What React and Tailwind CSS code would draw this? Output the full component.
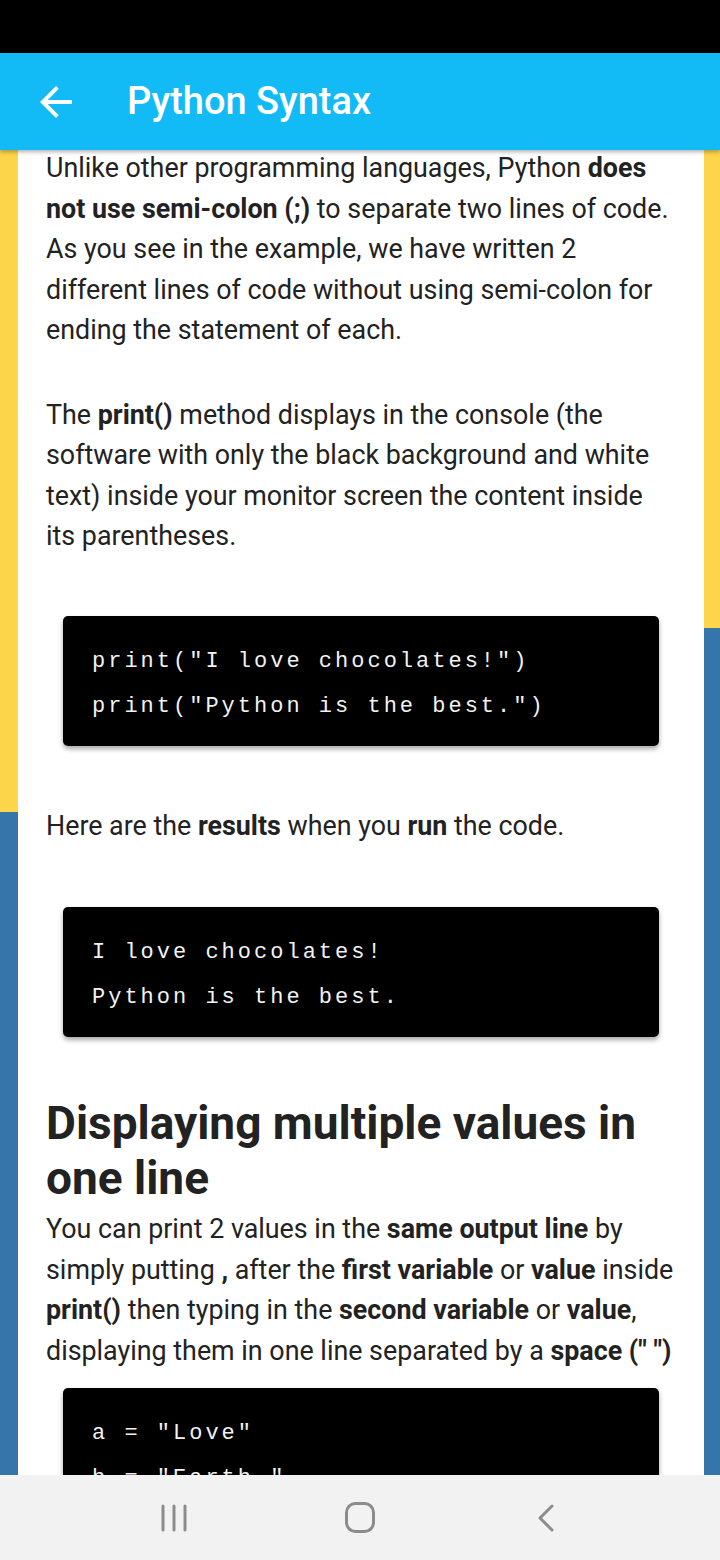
import React from "react";

const font = { fontFamily: "Roboto, 'Noto Sans', sans-serif" };

function CodeBlock({ lines, className = "" }) {
  return (
    <div
      className={
        "mx-[17px] rounded-[5px] bg-black px-[29px] pt-[23px] pb-[17px] shadow-[0_3px_5px_rgba(0,0,0,0.35)] " +
        className
      }
    >
      {lines.map((line, i) => (
        <div
          key={i}
          className="whitespace-pre text-[22px] leading-[45px] tracking-[3px] text-[#f2f2f2]"
          style={{ fontFamily: "'Courier New', 'Nimbus Mono PS', FreeMono, 'Liberation Mono', monospace" }}
        >
          {line}
        </div>
      ))}
    </div>
  );
}

function NavBar() {
  return (
    <div className="flex h-[85px] items-center bg-[#f2f2f2]">
      <div className="flex w-[240px] justify-center pl-[108px] pr-0">
        <svg width="30" height="28" viewBox="0 0 30 28">
          <path d="M4 2v24M15 2v24M26 2v24" stroke="#8c8c8c" strokeWidth="3" strokeLinecap="round" />
        </svg>
      </div>
      <div className="flex w-[240px] justify-center">
        <svg width="30" height="31" viewBox="0 0 30 31">
          <rect x="1.5" y="1.5" width="27" height="28" rx="9" fill="none" stroke="#8c8c8c" strokeWidth="3" />
        </svg>
      </div>
      <div className="flex w-[240px] justify-center pr-[108px]">
        <svg width="18" height="28" viewBox="0 0 18 28">
          <path d="M15 2L3 14l12 12" fill="none" stroke="#8c8c8c" strokeWidth="3" strokeLinecap="round" strokeLinejoin="round" />
        </svg>
      </div>
    </div>
  );
}

export default function App() {
  return (
    <div className="flex h-[1560px] w-[720px] flex-col overflow-hidden bg-black" style={font}>
      <div className="h-[53px] bg-black" />
      <div className="relative z-10 flex h-[97px] items-center bg-[#12bbf5] shadow-[0_2px_4px_rgba(0,0,0,0.3)]">
        <svg className="ml-[32px]" width="48" height="48" viewBox="0 0 24 24" fill="#ffffff">
          <path d="M20 11H7.83l5.59-5.59L12 4l-8 8 8 8 1.41-1.41L7.83 13H20v-2z" />
        </svg>
        <h1 className="ml-[47px] text-[38px] font-medium text-white">Python Syntax</h1>
      </div>

      <div className="flex h-[1325px] overflow-hidden bg-[#3675a9]">
        <div className="flex w-[18px] flex-col">
          <div className="h-[662px] bg-[#fdd54a]" />
        </div>

        <div className="w-[686px] bg-white px-[28px] text-[26.85px] leading-[40.5px] text-[#222222]">
          <p className="-mt-[2px]">
            Unlike other programming languages, Python <b>does not use semi-colon (;)</b> to separate two lines of
            code. As you see in the example, we have written 2 different lines of code without using semi-colon for
            ending the statement of each.
          </p>
          <p className="mt-[44px]">
            The <b>print()</b> method displays in the console (the software with only the black background and white
            text) inside your monitor screen the content inside its parentheses.
          </p>

          <CodeBlock className="mt-[59px]" lines={['print("I love chocolates!")', 'print("Python is the best.")']} />

          <p className="mt-[60px]">
            Here are the <b>results</b> when you <b>run</b> the code.
          </p>

          <CodeBlock className="mt-[61px]" lines={["I love chocolates!", "Python is the best."]} />

          <h2 className="mt-[59px] text-[46px] font-bold leading-[55px] text-[#222222]">
            Displaying multiple values in one line
          </h2>
          <p className="mt-[3px]">
            You can print 2 values in the <b>same output line</b> by simply putting <b>,</b> after the{" "}
            <b>first variable</b> or <b>value</b> inside <b>print()</b> then typing in the <b>second variable</b> or{" "}
            <b>value</b>, displaying them in one line separated by a <b>space (" ")</b>
          </p>

          <CodeBlock className="mt-[17px]" lines={['a = "Love"', 'b = "Earth "', "print(a, b)"]} />
        </div>

        <div className="flex w-[16px] flex-col">
          <div className="h-[478px] bg-[#fdd54a]" />
        </div>
      </div>

      <NavBar />
    </div>
  );
}
